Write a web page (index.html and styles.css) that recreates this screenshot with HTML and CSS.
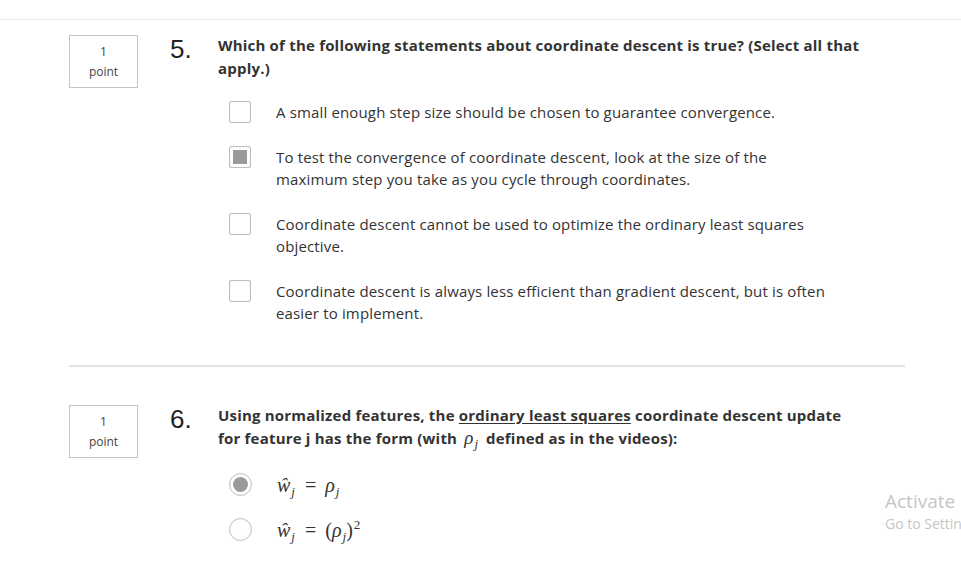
FILE: index.html
```html
<!DOCTYPE html>
<html>
<head>
<meta charset="utf-8">
<link rel="stylesheet" href="styles.css">
</head>
<body>
<div class="topbar"></div>
<main class="quiz">
  <section class="question q5">
    <div class="points"><span>1</span><span>point</span></div>
    <div class="num">5.</div>
    <div class="body">
      <p class="prompt">Which of the following statements about coordinate descent is true? (Select all that apply.)</p>
      <ul class="options">
        <li class="option"><span class="check"></span><span class="label">A small enough step size should be chosen to guarantee convergence.</span></li>
        <li class="option"><span class="check checked"></span><span class="label">To test the convergence of coordinate descent, look at the size of the maximum step you take as you cycle through coordinates.</span></li>
        <li class="option"><span class="check"></span><span class="label">Coordinate descent cannot be used to optimize the ordinary least squares objective.</span></li>
        <li class="option"><span class="check"></span><span class="label">Coordinate descent is always less efficient than gradient descent, but is often easier to implement.</span></li>
      </ul>
    </div>
  </section>
  <hr class="divider">
  <section class="question q6">
    <div class="points"><span>1</span><span>point</span></div>
    <div class="num">6.</div>
    <div class="body">
      <p class="prompt">Using normalized features, the <u>ordinary least squares</u> coordinate descent update<br>for feature j has the form (with <span class="math inl"><i>ρ</i><sub><i>j</i></sub></span> defined as in the videos):</p>
      <ul class="options radios">
        <li class="option"><span class="radio checked"></span><span class="math"><i>ŵ</i><sub><i>j</i></sub><span class="eq">=</span><i>ρ</i><sub><i>j</i></sub></span></li>
        <li class="option"><span class="radio"></span><span class="math"><i>ŵ</i><sub><i>j</i></sub><span class="eq">=</span>(<i>ρ</i><sub><i>j</i></sub>)<sup>2</sup></span></li>
      </ul>
    </div>
  </section>
</main>
<div class="watermark"><div class="wm1">Activate</div><div class="wm2">Go to Settings</div></div>
</body>
</html>
```
FILE: styles.css
```css
html, body {
  margin: 0;
  padding: 0;
  background: #fff;
  overflow: hidden;
  width: 961px;
  height: 562px;
}
body {
  font-family: "Open Sans", "Liberation Sans", sans-serif;
  color: #333;
  position: relative;
}
.topbar {
  height: 19px;
  border-bottom: 1px solid #e6e6e6;
}
.quiz {
  margin-left: 69px;
  width: 836px;
}
.question {
  display: flex;
  align-items: flex-start;
}
.q5 { padding-top: 14px; }
.q6 { padding-top: 37px; }
.points {
  width: 67px;
  height: 51px;
  border: 1px solid #c4c4c4;
  display: flex;
  flex-direction: column;
  align-items: center;
  justify-content: center;
  font-size: 12px;
  line-height: 20px;
  color: #444;
  flex: none;
  margin-top: 1px;
}
.num {
  width: 48px;
  margin-left: 32px;
  font-family: "Liberation Sans", Arial, sans-serif;
  font-size: 26px;
  line-height: 30px;
  color: #222;
  flex: none;
}
.body { flex: 1; }
.prompt {
  margin: 0;
  font-weight: 700;
  font-size: 15px;
  letter-spacing: 0.2px;
  line-height: 23px;
  width: 660px;
  color: #333;
}
.prompt u { text-underline-offset: 2px; }
.options {
  list-style: none;
  margin: 21px 0 0 11px;
  padding: 0;
  display: flex;
  flex-direction: column;
  gap: 23px;
}
.option {
  display: flex;
  align-items: flex-start;
  font-size: 15px;
  letter-spacing: 0.15px;
  line-height: 22px;
}
.label { width: 557px; }
.check {
  width: 20px;
  height: 20px;
  border: 1px solid #bdbdbd;
  border-radius: 2px;
  box-shadow: inset 0 0 2px rgba(0,0,0,0.08);
  margin-right: 25px;
  flex: none;
  position: relative;
  background: #fff;
}
.check.checked::after {
  content: "";
  position: absolute;
  left: 3px; top: 3px; right: 3px; bottom: 3px;
  background: #9a9a9a;
}
.radios { margin-top: 23px; gap: 22px; }
.radios .option { align-items: center; }
.radio {
  width: 21px;
  height: 21px;
  border: 1px solid #c0c0c0;
  border-radius: 50%;
  margin-right: 25px;
  flex: none;
  box-shadow: inset 0 0 2px rgba(0,0,0,0.08);
  position: relative;
  background: #fff;
}
.radio.checked::after {
  content: "";
  position: absolute;
  left: 3px; top: 3px; right: 3px; bottom: 3px;
  border-radius: 50%;
  background: #9a9a9a;
}
.math {
  font-family: "Liberation Serif", "DejaVu Serif", serif;
  font-size: 20px;
  font-weight: 400;
  letter-spacing: 0;
  color: #333;
}
.math i { font-style: italic; }
.math sub { font-size: 13px; vertical-align: -4px; line-height: 0; margin-left: 1px; }
.math sup { font-size: 13px; vertical-align: 8px; line-height: 0; margin-left: 1px; }
.math .eq { margin: 0 9px 0 10px; }
.math.inl { font-size: 19px; line-height: 1; margin: 0 4px 0 3px; }
.divider {
  border: 0;
  height: 2px;
  background: #e2e2e2;
  margin: 41px 0 0 0;
}
.watermark {
  position: absolute;
  left: 885px;
  top: 489px;
  font-family: "Segoe UI", "Open Sans", sans-serif;
  color: #c6c6c6;
  white-space: nowrap;
}
.wm1 { font-size: 19px; line-height: 25px; }
.wm2 { font-size: 14px; line-height: 20px; }
```
